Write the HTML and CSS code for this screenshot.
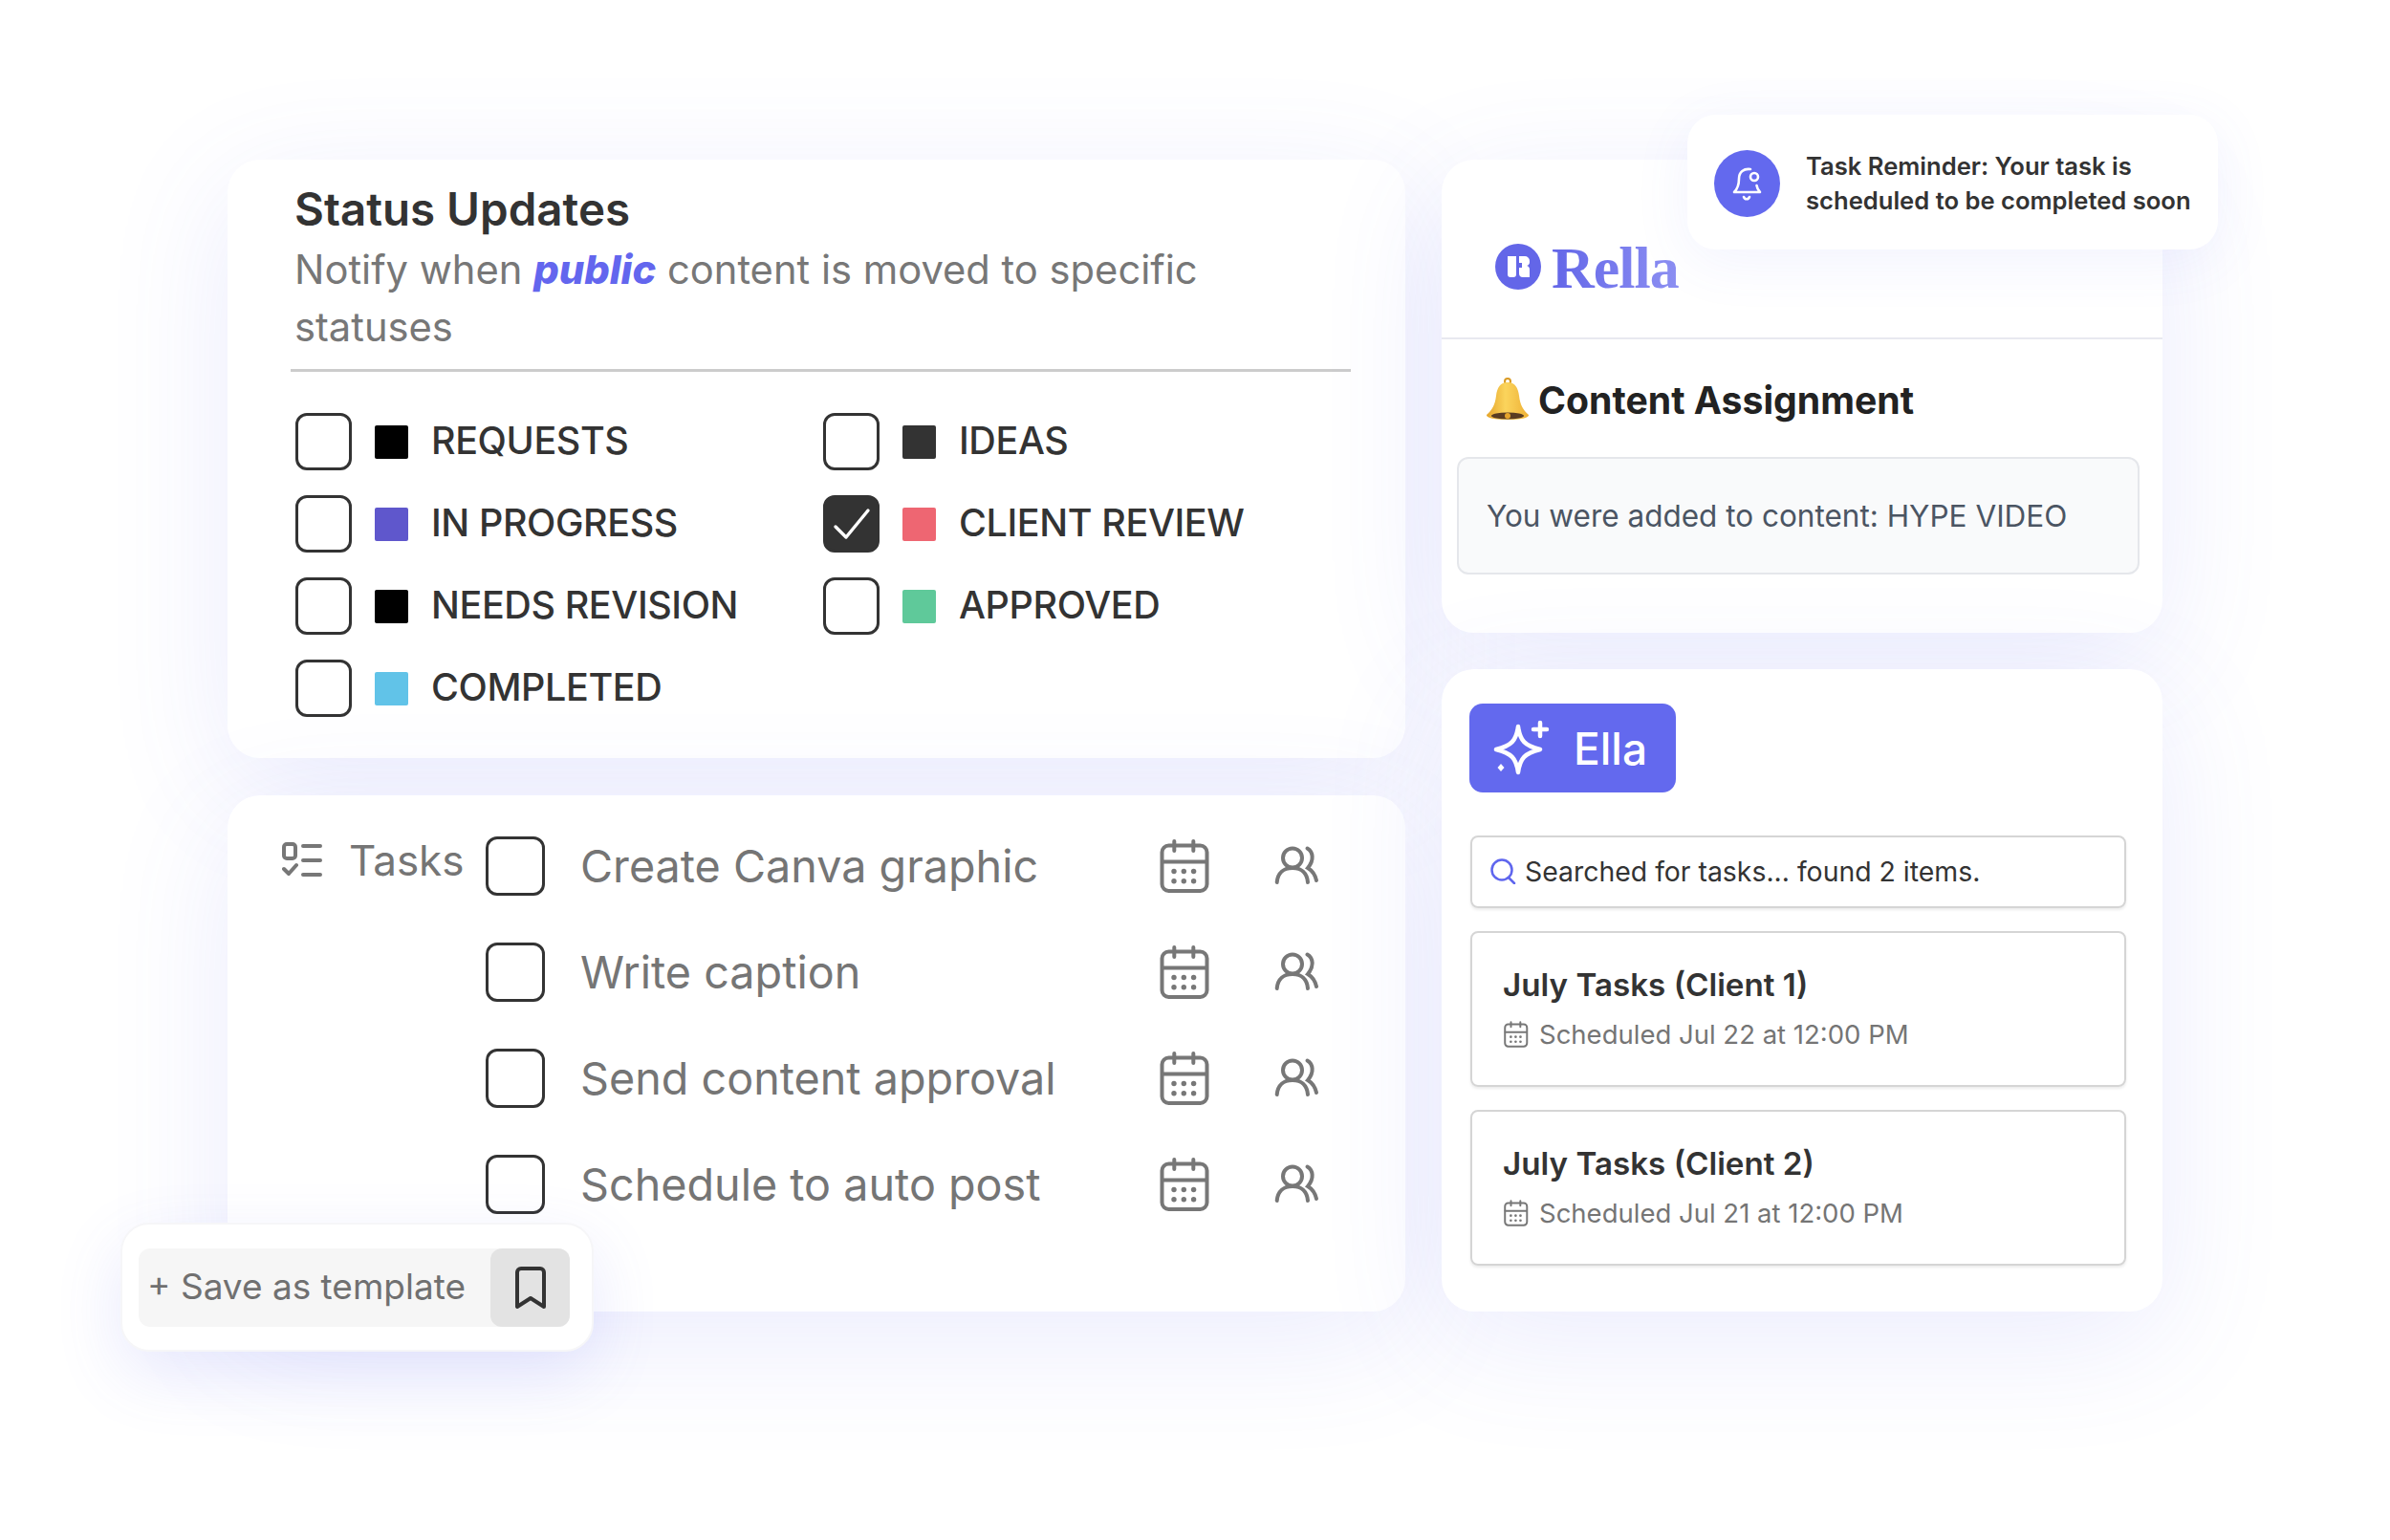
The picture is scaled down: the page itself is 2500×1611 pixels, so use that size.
FILE: index.html
```html
<!DOCTYPE html>
<html lang="en">
<head>
  <meta charset="UTF-8">
  <title>Rella notifications</title>
  <link rel="stylesheet" href="styles.css">
</head>
<body>
  <svg class="sprites" width="0" height="0">
    <symbol id="calendar" viewBox="0 0 53 56">
      <g fill="none" stroke="currentColor" stroke-width="4" stroke-linecap="round">
        <rect x="2.5" y="6.5" width="47" height="47.5" rx="7"/>
        <path d="M15.3 2v10M35.3 2v10M3 23.5h46"/>
      </g>
      <g fill="currentColor">
        <circle cx="15" cy="33.5" r="2.7"/><circle cx="25.3" cy="33.5" r="2.7"/><circle cx="35.6" cy="33.5" r="2.7"/>
        <circle cx="15" cy="43.7" r="2.7"/><circle cx="25.3" cy="43.7" r="2.7"/><circle cx="35.6" cy="43.7" r="2.7"/>
      </g>
    </symbol>
    <symbol id="people" viewBox="0 0 48 48">
      <g fill="none" stroke="currentColor" stroke-width="4" stroke-linecap="round">
        <circle cx="19" cy="14.5" r="10"/>
        <path d="M2.7 40C3.5 30 10 25 19 25s15.200 5 16 15"/>
        <path d="M34.500 4.500c6 3.500 7.500 12 .5 20.500 5 3 8 8.500 9 13"/>
      </g>
    </symbol>
  </svg>

  <main class="board">
    <div class="column-left">
      <section class="card status-card">
        <h2 class="status-title">Status Updates</h2>
        <p class="status-sub">Notify when <em>public</em> content is moved to specific statuses</p>
        <div class="divider"></div>
        <div class="status-grid">
          <div class="status-row"><span class="box"></span><span class="swatch swatch-black"></span><span class="status-name">REQUESTS</span></div>
          <div class="status-row"><span class="box"></span><span class="swatch swatch-dark"></span><span class="status-name">IDEAS</span></div>
          <div class="status-row"><span class="box"></span><span class="swatch swatch-purple"></span><span class="status-name">IN PROGRESS</span></div>
          <div class="status-row">
            <span class="box box-checked">
              <svg viewBox="0 0 40 40" width="40" height="40"><path d="M3 23l11 11L37 6" fill="none" stroke="#fff" stroke-width="3.400" stroke-linecap="round" stroke-linejoin="round"/></svg>
            </span>
            <span class="swatch swatch-red"></span><span class="status-name">CLIENT REVIEW</span>
          </div>
          <div class="status-row"><span class="box"></span><span class="swatch swatch-black"></span><span class="status-name">NEEDS REVISION</span></div>
          <div class="status-row"><span class="box"></span><span class="swatch swatch-green"></span><span class="status-name">APPROVED</span></div>
          <div class="status-row"><span class="box"></span><span class="swatch swatch-blue"></span><span class="status-name">COMPLETED</span></div>
        </div>
      </section>

      <section class="card tasks-card">
        <div class="tasks-label">
          <svg class="tasks-icon" viewBox="0 0 42 38" width="42" height="38">
            <g fill="none" stroke="#777" stroke-width="4" stroke-linecap="round" stroke-linejoin="round">
              <rect x="2" y="2" width="12" height="15" rx="3"/>
              <path d="M22 4h18M22 19h18M22 34h18M2 28l5 5 8-9"/>
            </g>
          </svg>
          <span>Tasks</span>
        </div>
        <div class="task-list">
          <div class="task-row">
            <span class="task-box"></span><span class="task-name">Create Canva graphic</span>
            <svg class="icon-cal"><use href="#calendar"/></svg><svg class="icon-people"><use href="#people"/></svg>
          </div>
          <div class="task-row">
            <span class="task-box"></span><span class="task-name">Write caption</span>
            <svg class="icon-cal"><use href="#calendar"/></svg><svg class="icon-people"><use href="#people"/></svg>
          </div>
          <div class="task-row">
            <span class="task-box"></span><span class="task-name">Send content approval</span>
            <svg class="icon-cal"><use href="#calendar"/></svg><svg class="icon-people"><use href="#people"/></svg>
          </div>
          <div class="task-row">
            <span class="task-box"></span><span class="task-name">Schedule to auto post</span>
            <svg class="icon-cal"><use href="#calendar"/></svg><svg class="icon-people"><use href="#people"/></svg>
          </div>
        </div>
      </section>
    </div>

    <div class="column-right">
      <section class="card assign-card">
        <div class="logo-bar">
          <svg class="logo-mark" viewBox="0 0 48 48" width="48" height="48">
            <circle cx="24" cy="24" r="24" fill="#6366e8"/>
            <path d="M13 13h9v19a3 3 0 0 1-3 3h-3a3 3 0 0 1-3-3z" fill="#fff"/>
            <path d="M25 13h6a5 5 0 0 1 5 5v1a4 4 0 0 1-3 4 4 4 0 0 1 3 4v8h-7a4 4 0 0 1-4-4v-6h3v-5h-3z" fill="#fff"/>
          </svg>
          <span class="logo-word">Rella</span>
        </div>
        <h3 class="assign-title">
          <svg class="bell-emoji" viewBox="0 0 46 46" width="46" height="46">
            <defs>
              <linearGradient id="bellfill" x1="0" y1="0" x2="1" y2="0">
                <stop offset="0" stop-color="#e5a52b"/><stop offset=".45" stop-color="#fbd45c"/><stop offset="1" stop-color="#eeb136"/>
              </linearGradient>
            </defs>
            <circle cx="23" cy="4" r="3" fill="none" stroke="#d99a24" stroke-width="2"/>
            <path d="M23 5c8 0 11 6 12 14 1 9 4 15 10 20 1 3-9 5-22 5S0 42 1 39c6-5 9-11 10-20 1-8 4-14 12-14z" fill="url(#bellfill)"/>
            <ellipse cx="23" cy="40" rx="17" ry="3.500" fill="#5a3d22"/>
            <circle cx="23" cy="40" r="3" fill="#e5a52b"/>
          </svg>
          <span>Content Assignment</span>
        </h3>
        <div class="assign-box">You were added to content: HYPE VIDEO</div>
      </section>

      <section class="card ella-card">
        <div class="ella-badge">
          <svg viewBox="0 0 60 60" width="60" height="60">
            <path d="M26 7c2 15 7 20 23 24-16 4-21 9-23 24-2-15-7-20-23-24 16-4 21-9 23-24z" fill="none" stroke="#fff" stroke-width="4.500" stroke-linejoin="round"/>
            <path d="M49 3v14M42 10h14" fill="none" stroke="#fff" stroke-width="4.500" stroke-linecap="round"/>
            <path d="M8 46l3.500 4L8 54l-3.500-4z" fill="#fff"/>
          </svg>
          <span>Ella</span>
        </div>
        <div class="search-line">
          <svg viewBox="0 0 28 28" width="28" height="28">
            <circle cx="13" cy="13" r="10.500" fill="none" stroke="#5f66ee" stroke-width="2.500"/>
            <path d="M20 21l6 6" stroke="#5f66ee" stroke-width="2.500" stroke-linecap="round"/>
          </svg>
          <span>Searched for tasks... found 2 items.</span>
        </div>
        <div class="result">
          <div class="result-title">July Tasks (Client 1)</div>
          <div class="result-meta"><svg class="icon-small"><use href="#calendar"/></svg><span>Scheduled Jul 22 at 12:00 PM</span></div>
        </div>
        <div class="result">
          <div class="result-title">July Tasks (Client 2)</div>
          <div class="result-meta"><svg class="icon-small"><use href="#calendar"/></svg><span>Scheduled Jul 21 at 12:00 PM</span></div>
        </div>
      </section>
    </div>

    <div class="toast">
      <span class="toast-icon">
        <svg viewBox="0 0 34 38" width="34" height="38">
          <g fill="none" stroke="#fff" stroke-width="2.600" stroke-linecap="round" stroke-linejoin="round">
            <path d="M20 4c-7-1-12 3-12 10 0 6-1 10-5 14h27c-2-2-3-4-3.500-7"/>
            <circle cx="24" cy="12" r="4"/>
            <path d="M13 33c1 3 5 3 6 0"/>
          </g>
        </svg>
      </span>
      <p class="toast-text">Task Reminder: Your task is scheduled to be completed soon</p>
    </div>

    <div class="save-panel">
      <div class="save-field">
        <span class="save-text">+ Save as template</span>
        <span class="save-button">
          <svg viewBox="0 0 34 46" width="34" height="46">
            <path d="M3 43V7a4 4 0 0 1 4-4h20a4 4 0 0 1 4 4v36l-14-9z" fill="none" stroke="#333" stroke-width="4" stroke-linejoin="round"/>
          </svg>
        </span>
      </div>
    </div>
  </main>
</body>
</html>
```

FILE: styles.css
```css
* {
  box-sizing: border-box;
}

body {
  margin: 0;
  min-height: 1611px;
  background-color: #fff;
  font-family: "Inter", "Noto Sans", sans-serif;
  color: #333;
  overflow: hidden;
}

.sprites {
  position: absolute;
}

.board {
  position: relative;
  width: 2500px;
  height: 1611px;
  padding: 167px 0 0 238px;
  display: flex;
  gap: 38px;
  align-items: flex-start;
}

.column-left {
  width: 1232px;
  display: flex;
  flex-direction: column;
  gap: 39px;
}

.column-right {
  width: 754px;
  display: flex;
  flex-direction: column;
  gap: 38px;
}

.card {
  background-color: #fff;
  border-radius: 34px;
  box-shadow: 0 30px 130px rgba(92, 98, 240, 0.12);
}

/* status card */
.status-card {
  height: 626px;
  padding: 21px 0 0 70px;
}

.status-title {
  margin: 0;
  font-size: 47.5px;
  line-height: 62px;
  font-weight: 600;
  color: #333;
}

.status-sub {
  margin: 2px 0 0;
  width: 1000px;
  font-size: 41.7px;
  line-height: 60px;
  color: #777;
}

.status-sub em {
  font-weight: 800;
  font-style: italic;
  color: #6366ee;
}

.divider {
  height: 3px;
  width: 1109px;
  margin: 14px 0 43px -4px;
  background-color: #ccc;
}

.status-grid {
  display: grid;
  grid-template-columns: 552px 1fr;
  row-gap: 26px;
  padding-left: 1px;
}

.status-row {
  display: flex;
  align-items: center;
  height: 60px;
}

.box {
  width: 59px;
  height: 60px;
  border: 3px solid #333;
  border-radius: 12px;
  display: flex;
  align-items: center;
  justify-content: center;
}

.box-checked {
  background-color: #333;
}

.swatch {
  width: 35px;
  height: 35px;
  margin: 0 24px;
  border-radius: 2px;
}

.swatch-black { background-color: #000; }
.swatch-dark { background-color: #333; }
.swatch-purple { background-color: #5f57cc; }
.swatch-red { background-color: #ee6672; }
.swatch-green { background-color: #5fc99a; }
.swatch-blue { background-color: #61c3e8; }

.status-name {
  margin-top: -3px;
  font-size: 39.5px;
  letter-spacing: -0.4px;
  font-weight: 500;
  color: #333;
  white-space: nowrap;
}

/* tasks card */
.tasks-card {
  height: 540px;
  padding: 43px 0 0 57px;
  display: flex;
}

.tasks-label {
  width: 213px;
  height: 50px;
  display: flex;
  align-items: center;
  gap: 28px;
  font-size: 44px;
  color: #757575;
}

.task-list {
  display: flex;
  flex-direction: column;
  gap: 49px;
}

.task-row {
  display: flex;
  align-items: center;
  height: 62px;
}

.task-box {
  width: 62px;
  height: 62px;
  border: 3px solid #333;
  border-radius: 12px;
  flex-shrink: 0;
}

.task-name {
  width: 606px;
  margin-left: 37px;
  font-size: 46.7px;
  color: #757575;
  white-space: nowrap;
}

.icon-cal {
  width: 53px;
  height: 56px;
  color: #777;
}

.icon-people {
  width: 48px;
  height: 48px;
  margin: 2px 0 0 67px;
  color: #777;
}

/* right column */
.assign-card {
  height: 495px;
  padding: 0 24px 0 16px;
}

.logo-bar {
  height: 188px;
  margin: 0 -24px 0 -16px;
  padding: 88px 0 0 56px;
  display: flex;
  align-items: flex-start;
  gap: 11px;
  border-bottom: 2px solid #e8e9f0;
}

.logo-word {
  font-family: "Liberation Serif", serif;
  font-weight: 700;
  font-size: 62px;
  line-height: 50px;
  letter-spacing: -1px;
  background: linear-gradient(90deg, #6366e8, #8d90f2);
  -webkit-background-clip: text;
  background-clip: text;
  color: transparent;
}

.assign-title {
  margin: 0;
  height: 123px;
  padding: 3px 0 0 30px;
  display: flex;
  align-items: center;
  gap: 9px;
  font-size: 39.2px;
  font-weight: 700;
  color: #222;
}

.assign-box {
  height: 123px;
  padding-left: 29px;
  display: flex;
  align-items: center;
  background-color: #f9fafb;
  border: 2px solid #e5e7eb;
  border-radius: 12px;
  font-size: 31.5px;
  color: #4b5563;
}

.ella-card {
  height: 672px;
  padding: 36px 0 0 30px;
}

.ella-badge {
  width: 216px;
  height: 93px;
  margin-left: -1px;
  padding-left: 25px;
  display: flex;
  align-items: center;
  gap: 24px;
  background-color: #6369ee;
  border-radius: 14px;
  color: #fff;
  font-size: 46px;
  font-weight: 500;
}

.search-line {
  width: 686px;
  height: 76px;
  margin-top: 45px;
  padding: 0 0 2px 18px;
  display: flex;
  align-items: center;
  gap: 9px;
  border: 2px solid #d5d5d5;
  border-radius: 8px;
  box-shadow: 0 2px 3px rgba(0, 0, 0, 0.08);
  font-size: 28.4px;
  color: #333;
}

.result {
  width: 686px;
  height: 163px;
  margin-top: 24px;
  padding: 32px 0 0 32px;
  border: 2px solid #d5d5d5;
  border-radius: 8px;
  box-shadow: 0 2px 3px rgba(0, 0, 0, 0.08);
}

.result-title {
  font-size: 33.2px;
  line-height: 44px;
  font-weight: 600;
  color: #333;
}

.result-meta {
  margin-top: 9px;
  padding-left: 1px;
  display: flex;
  align-items: center;
  gap: 11px;
  font-size: 27.5px;
  line-height: 42px;
  color: #757575;
}

.icon-small {
  width: 26px;
  height: 30px;
  color: #777;
}

/* things laid over the cards */
.toast {
  position: absolute;
  left: 1765px;
  top: 120px;
  width: 555px;
  height: 141px;
  padding: 3px 0 0 28px;
  display: flex;
  align-items: center;
  gap: 27px;
  background-color: #fff;
  border-radius: 30px;
  box-shadow: 0 12px 60px rgba(92, 98, 240, 0.08);
}

.toast-icon {
  width: 69px;
  height: 70px;
  flex-shrink: 0;
  display: flex;
  align-items: center;
  justify-content: center;
  border-radius: 50%;
  background-color: #6369ee;
}

.toast-text {
  margin: 0;
  width: 425px;
  font-size: 25.6px;
  line-height: 36px;
  font-weight: 600;
  color: #333;
}

.save-panel {
  position: absolute;
  left: 126px;
  top: 1279px;
  width: 495px;
  height: 135px;
  padding: 25px 23px 0 17px;
  background-color: #fff;
  border: 2px solid #f6f6f8;
  border-radius: 30px;
  box-shadow: 0 24px 70px rgba(92, 98, 240, 0.14);
}

.save-field {
  height: 82px;
  padding-left: 9px;
  display: flex;
  align-items: center;
  justify-content: space-between;
  background-color: #f6f6f6;
  border-radius: 12px;
}

.save-text {
  margin-top: -4px;
  font-size: 37px;
  color: #707070;
  white-space: nowrap;
}

.save-button {
  width: 83px;
  height: 82px;
  display: flex;
  align-items: center;
  justify-content: center;
  background-color: #e3e3e3;
  border-radius: 12px;
}
```
